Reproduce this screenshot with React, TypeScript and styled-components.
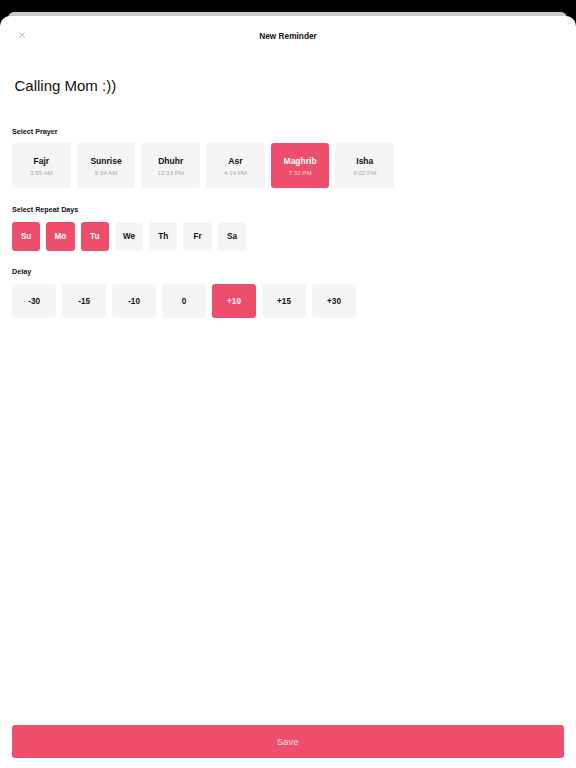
import React, { useState } from "react";
import styled, { createGlobalStyle } from "styled-components";

const COLORS = {
  accent: "#ee4e6b",
  tile: "#f5f5f5",
  text: "#111111",
  muted: "#a9a9a9",
};

const PRAYERS = [
  { name: "Fajr", time: "3:55 AM" },
  { name: "Sunrise", time: "5:34 AM" },
  { name: "Dhuhr", time: "12:33 PM" },
  { name: "Asr", time: "4:14 PM" },
  { name: "Maghrib", time: "7:32 PM" },
  { name: "Isha", time: "9:02 PM" },
];

const DAYS = ["Su", "Mo", "Tu", "We", "Th", "Fr", "Sa"];
const DELAYS = ["-30", "-15", "-10", "0", "+10", "+15", "+30"];

const GlobalStyle = createGlobalStyle`
  html, body {
    margin: 0;
    padding: 0;
    background: #000;
  }
  body {
    font-family: "Liberation Sans", Arial, sans-serif;
    color: ${COLORS.text};
  }
  * { box-sizing: border-box; }
`;

export default function App() {
  const [prayer, setPrayer] = useState("Maghrib");
  const [days, setDays] = useState<string[]>(["Su", "Mo", "Tu"]);
  const [delay, setDelay] = useState("+10");

  const toggleDay = (d: string) =>
    setDays(days.includes(d) ? days.filter((x) => x !== d) : [...days, d]);

  return (
    <>
      <GlobalStyle />
      <Screen>
        <BackSheet />
        <Sheet>
          <Header>
            <CloseButton aria-label="Close">
              <svg width="6" height="6" viewBox="0 0 6 6">
                <path d="M0.5 0.5 L5.5 5.5 M5.5 0.5 L0.5 5.5" stroke="#a8a8a8" strokeWidth="0.8" strokeLinecap="round" />
              </svg>
            </CloseButton>
            <HeaderTitle>New Reminder</HeaderTitle>
          </Header>

          <Content>
            <Title>Calling Mom :))</Title>

            <Label $top={32}>Select Prayer</Label>
            <PrayerRow>
              {PRAYERS.map((p) => (
                <PrayerCard key={p.name} $active={prayer === p.name} onClick={() => setPrayer(p.name)}>
                  <PrayerName>{p.name}</PrayerName>
                  <PrayerTime $active={prayer === p.name}>{p.time}</PrayerTime>
                </PrayerCard>
              ))}
            </PrayerRow>

            <Label $top={17}>Select Repeat Days</Label>
            <DayRow>
              {DAYS.map((d) => (
                <DayButton key={d} $active={days.includes(d)} onClick={() => toggleDay(d)}>
                  {d}
                </DayButton>
              ))}
            </DayRow>

            <Label $top={16}>Delay</Label>
            <DelayRow>
              {DELAYS.map((d) => (
                <DelayButton key={d} $active={delay === d} onClick={() => setDelay(d)}>
                  {d}
                </DelayButton>
              ))}
            </DelayRow>
          </Content>

          <Footer>
            <SaveButton>Save</SaveButton>
          </Footer>
        </Sheet>
      </Screen>
    </>
  );
}

const Screen = styled.div`
  display: flex;
  flex-direction: column;
  height: 768px;
  padding-top: 12px;
  background: #000;
  overflow: hidden;
`;

const BackSheet = styled.div`
  height: 6px;
  margin: 0 9px -2px 8px;
  background: #cbcbcb;
  border-radius: 6px 6px 0 0;
`;

const Sheet = styled.div`
  flex: 1;
  display: flex;
  flex-direction: column;
  background: #fff;
  border-radius: 10px 10px 0 0;
`;

const Header = styled.div`
  position: relative;
  display: flex;
  justify-content: center;
  align-items: center;
  height: 40px;
`;

const CloseButton = styled.button`
  position: absolute;
  left: 16px;
  top: 13px;
  width: 12px;
  height: 12px;
  padding: 0;
  display: flex;
  justify-content: center;
  align-items: center;
  border: none;
  background: none;
`;

const HeaderTitle = styled.h1`
  margin: 0;
  font-size: 8.3px;
  font-weight: bold;
`;

const Content = styled.div`
  display: flex;
  flex-direction: column;
  padding: 0 12px;
`;

const Title = styled.div`
  margin-top: 20px;
  padding-left: 2.5px;
  font-size: 15px;
  line-height: 19px;
`;

const Label = styled.div<{ $top: number }>`
  margin-top: ${(p) => p.$top}px;
  font-size: 7.2px;
  line-height: 10px;
  font-weight: bold;
`;

const PrayerRow = styled.div`
  display: flex;
  gap: 6px;
  margin-top: 6px;
`;

const PrayerCard = styled.div<{ $active?: boolean }>`
  display: flex;
  flex-direction: column;
  align-items: center;
  padding-top: 13px;
  width: 58.7px;
  height: 45px;
  border-radius: 3px;
  background: ${(p) => (p.$active ? COLORS.accent : COLORS.tile)};
  color: ${(p) => (p.$active ? "#fff" : COLORS.text)};
  cursor: pointer;
`;

const PrayerName = styled.div`
  font-size: 8.5px;
  font-weight: bold;
  line-height: 10px;
`;

const PrayerTime = styled.div<{ $active?: boolean }>`
  margin-top: 2px;
  font-size: 6.2px;
  line-height: 10px;
  color: ${(p) => (p.$active ? "rgba(255,255,255,0.78)" : COLORS.muted)};
`;

const DayRow = styled.div`
  display: flex;
  gap: 6px;
  margin-top: 7px;
`;

const Tile = styled.button<{ $active?: boolean }>`
  display: flex;
  justify-content: center;
  align-items: center;
  padding: 0;
  border: none;
  border-radius: 3px;
  font-family: inherit;
  font-size: 8.2px;
  font-weight: bold;
  background: ${(p) => (p.$active ? COLORS.accent : COLORS.tile)};
  color: ${(p) => (p.$active ? "#fff" : COLORS.text)};
  cursor: pointer;
`;

const DayButton = styled(Tile)`
  width: 28.3px;
  height: 28.5px;
`;

const DelayRow = styled.div`
  display: flex;
  gap: 5.8px;
  margin-top: 7.5px;
`;

const DelayButton = styled(Tile)`
  width: 44.2px;
  height: 34px;
`;

const Footer = styled.div`
  margin-top: auto;
  padding: 0 12px 10px 11.5px;
`;

const SaveButton = styled.button`
  width: 100%;
  height: 33px;
  border: none;
  border-radius: 3px;
  background: ${COLORS.accent};
  color: rgba(255, 255, 255, 0.85);
  font-family: inherit;
  font-size: 9.4px;
  cursor: pointer;
`;
